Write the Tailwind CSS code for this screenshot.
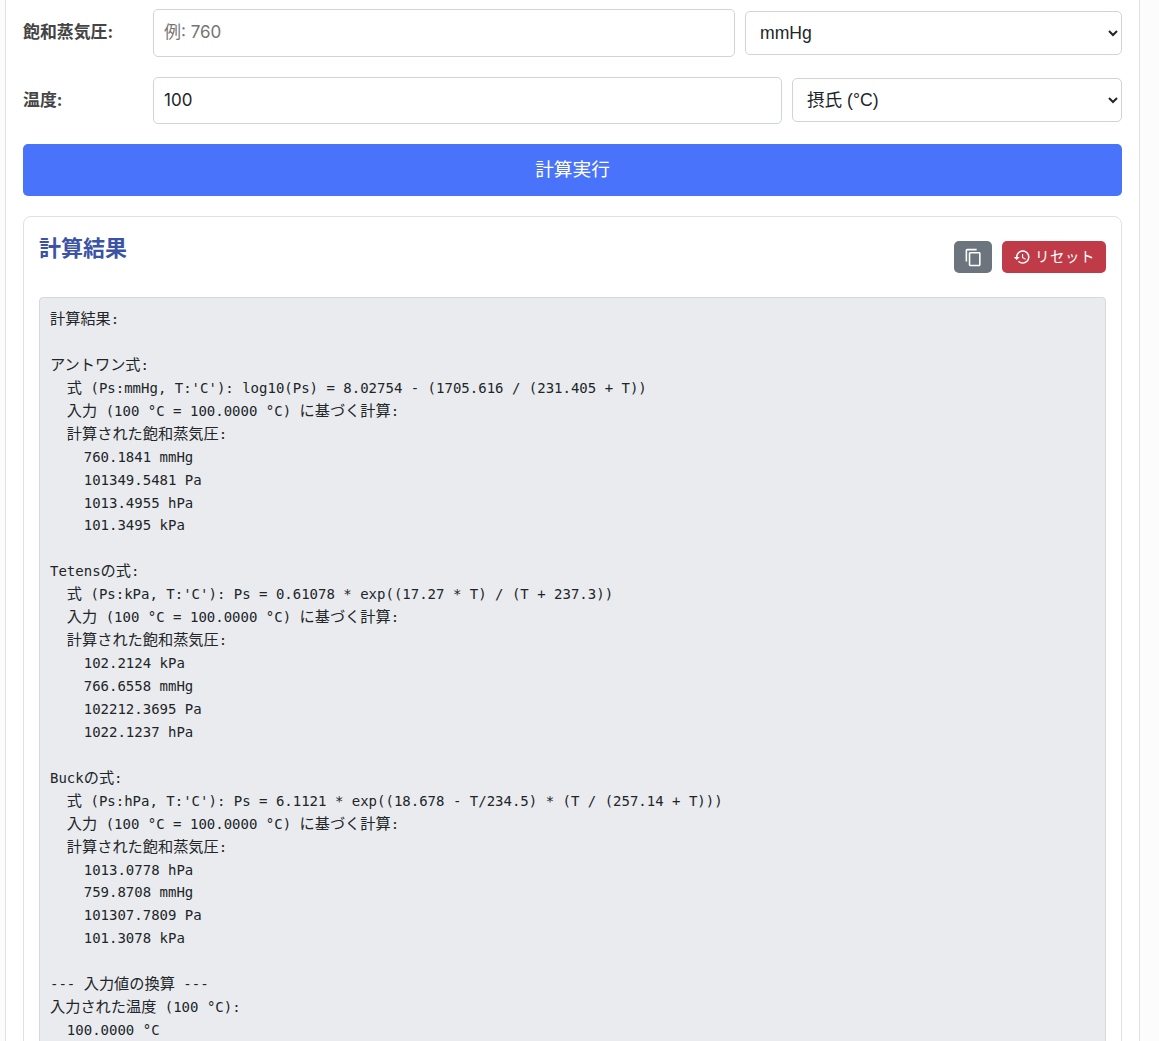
<!DOCTYPE html>
<html lang="ja">
<head>
    <meta charset="UTF-8">
    <meta name="viewport" content="width=device-width, initial-scale=1.0">
    <title>飽和蒸気圧 計算</title>
    <script src="https://cdn.jsdelivr.net/npm/@tailwindcss/browser@4"></script>
</head>
<body class="bg-[#fcfcfc] font-['Inter','Noto_Sans_CJK_JP',sans-serif] text-[#212529]">
    <div class="h-[1041px] overflow-hidden pl-[5px] pr-[19px]">
        <main class="bg-white border-x border-[#dee2e6] px-[17px] pt-[9px] h-full">
            <!-- Vapor pressure -->
            <div class="flex items-center gap-[10px] mb-5">
                <label class="w-[120px] shrink-0 font-bold text-[#444] text-[16.9px] leading-[24px] -mt-[2px]">飽和蒸気圧:</label>
                <input type="text" placeholder="例: 760" class="w-[582px] h-[48px] px-[10px] pb-[2px] text-[17px] bg-white border border-[#ced4da] rounded-[5px] outline-none placeholder:text-[#757575]">
                <select class="flex-1 h-[44px] px-[10px] text-[17.6px] font-['Liberation_Sans','Noto_Sans_CJK_JP',sans-serif] bg-white border border-[#ced4da] rounded-[5px] appearance-auto">
                    <option>mmHg</option>
                </select>
            </div>

            <!-- Temperature -->
            <div class="flex items-center gap-[10px] mb-5">
                <label class="w-[120px] shrink-0 font-bold text-[#444] text-[16.9px] leading-[24px] -mt-[2px]">温度:</label>
                <input type="text" value="100" class="w-[629px] h-[47px] px-[10px] pb-[2px] text-[17px] bg-white border border-[#ced4da] rounded-[5px] outline-none">
                <select class="flex-1 h-[44px] -mt-px px-[10px] text-[17.6px] font-['Liberation_Sans','Noto_Sans_CJK_JP',sans-serif] bg-white border border-[#ced4da] rounded-[5px] appearance-auto">
                    <option>摂氏 (°C)</option>
                </select>
            </div>

            <button class="w-full h-[52px] bg-[#4973fb] text-white text-[18.7px] font-normal rounded-[5px]">計算実行</button>

            <!-- Result card -->
            <section class="mt-5 border border-[#dee2e6] rounded-lg px-[15px] pt-[15px]">
                <div class="flex justify-between items-start h-[65px]">
                    <h2 class="text-[22px] leading-[32px] font-bold text-[#3a53a4]">計算結果</h2>
                    <div class="flex gap-[10px] mt-[9px]">
                        <button class="w-[38px] h-[32px] flex items-center justify-center bg-[#6c757d] rounded-[5px]">
                            <svg class="w-[19px] h-[19px]" viewBox="0 0 24 24" fill="#fff"><path d="M16 1H4c-1.1 0-2 .9-2 2v14h2V3h12V1zm3 4H8c-1.1 0-2 .9-2 2v14c0 1.1.9 2 2 2h11c1.1 0 2-.9 2-2V7c0-1.1-.9-2-2-2zm0 16H8V7h11v14z"/></svg>
                        </button>
                        <button class="w-[104px] h-[32px] flex items-center justify-center gap-[4px] bg-[#bf3b47] text-white text-[14.4px] tracking-[0.6px] rounded-[5px]">
                            <svg class="w-[18px] h-[18px]" viewBox="0 0 24 24" fill="#fff"><path d="M13 3c-4.97 0-9 4.03-9 9H1l3.89 3.89.07.14L9 12H6c0-3.87 3.13-7 7-7s7 3.13 7 7-3.13 7-7 7c-1.93 0-3.68-.79-4.94-2.06l-1.42 1.42C8.27 19.99 10.51 21 13 21c4.97 0 9-4.03 9-9s-4.03-9-9-9zm-1 5v5l4.28 2.54.72-1.21-3.5-2.08V8H12z"/></svg>
                            リセット
                        </button>
                    </div>
                </div>
                <pre class="h-[800px] overflow-hidden bg-[#e9ebee] border border-[#d5d8dc] rounded-[4px] px-[10px] pt-[10px] font-['DejaVu_Sans_Mono','Noto_Sans_CJK_JP',monospace] text-[14px] leading-[22.94px] text-[#212529]"><span class="text-[15.2px]">計算結果</span>:

<span class="text-[15.2px]">アントワン式</span>:
  <span class="text-[15.2px]">式</span> (Ps:mmHg, T:'C'): log10(Ps) = 8.02754 - (1705.616 / (231.405 + T))
  <span class="text-[15.2px]">入力</span> (100 °C = 100.0000 °C) <span class="text-[15.2px]">に基づく計算</span>:
  <span class="text-[15.2px]">計算された飽和蒸気圧</span>:
    760.1841 mmHg
    101349.5481 Pa
    1013.4955 hPa
    101.3495 kPa

Tetens<span class="text-[15.2px]">の式</span>:
  <span class="text-[15.2px]">式</span> (Ps:kPa, T:'C'): Ps = 0.61078 * exp((17.27 * T) / (T + 237.3))
  <span class="text-[15.2px]">入力</span> (100 °C = 100.0000 °C) <span class="text-[15.2px]">に基づく計算</span>:
  <span class="text-[15.2px]">計算された飽和蒸気圧</span>:
    102.2124 kPa
    766.6558 mmHg
    102212.3695 Pa
    1022.1237 hPa

Buck<span class="text-[15.2px]">の式</span>:
  <span class="text-[15.2px]">式</span> (Ps:hPa, T:'C'): Ps = 6.1121 * exp((18.678 - T/234.5) * (T / (257.14 + T)))
  <span class="text-[15.2px]">入力</span> (100 °C = 100.0000 °C) <span class="text-[15.2px]">に基づく計算</span>:
  <span class="text-[15.2px]">計算された飽和蒸気圧</span>:
    1013.0778 hPa
    759.8708 mmHg
    101307.7809 Pa
    101.3078 kPa

--- <span class="text-[15.2px]">入力値の換算</span> ---
<span class="text-[15.2px]">入力された温度</span> (100 °C):
  100.0000 °C</pre>
            </section>
        </main>
    </div>
</body>
</html>
